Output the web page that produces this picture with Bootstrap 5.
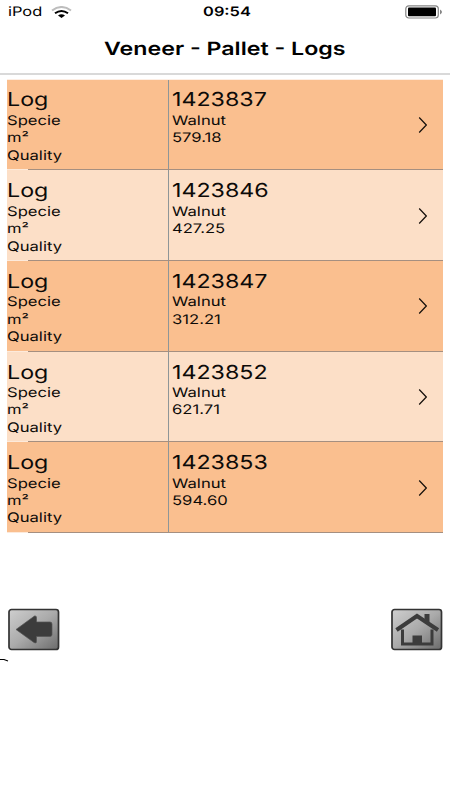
<!DOCTYPE html>
<html lang="en">
<head>
<meta charset="utf-8">
<meta name="viewport" content="width=device-width, initial-scale=1">
<title>Veneer - Pallet - Logs</title>
<link href="https://cdn.jsdelivr.net/npm/bootstrap@5.3.0/dist/css/bootstrap.min.css" rel="stylesheet">
<style>
body{font-family:Inter,"Liberation Sans",sans-serif;color:#000;background:#fff;height:800px;overflow:hidden;text-rendering:geometricPrecision}
.wide{display:inline-block;transform:scaleX(1.26);transform-origin:0 50%;white-space:nowrap}
.mid{transform-origin:50% 50%}
.status{height:24px;font-size:13px;line-height:24px;padding:0 7px 0 8px}
.status>*{flex:1 1 0}
.clock{font-weight:600;padding-left:2px}
.title-bar{height:51px;border-bottom:2px solid #d9d9d9;font-size:18.4px;line-height:20px;padding-top:15px;font-weight:600}
.logs{margin:4px 7px 0;padding-top:1px;background:linear-gradient(#fdeee4 1px,transparent 1px)}
.log-row{height:90.650px;background:#fcdfc7;position:relative;color:#0c0a08;font-size:13.2px;line-height:17.4px}
.log-row:nth-child(odd){background:#fabf8f}
.log-row:first-child{height:90.300px}
.log-row::after{content:"";position:absolute;left:21px;right:0;bottom:0;height:1px;background:#a58f80}
.log-row::before{content:"";position:absolute;left:0;width:21px;bottom:0;height:1px;background:#fdeadb}
.keys{width:161.500px;border-right:1px solid #8e9698;padding:8px 0 0 0}
.vals{padding:8px 0 0 3px}
.log-row:first-child>div{padding-top:7.400px}
.big{font-size:19.2px;line-height:24px;height:25.400px}
.big .wide{transform:scaleX(1.21)}
.tools{margin:75.300px 7px 0 7px}
</style>
<script src="https://cdn.jsdelivr.net/npm/bootstrap@5.3.0/dist/js/bootstrap.bundle.min.js"></script>
</head>
<body>
<header>
<div class="status d-flex align-items-center">
<div class="d-flex align-items-center"><span class="wide" style="width:43px">iPod</span>
<svg width="21" height="13" viewBox="0 0 21 13" fill="none"><path d="M1 4.500Q10.500-2.500 20 4.500" stroke="#bdbdbd" stroke-width="2"/><path d="M4 7.300Q10.500 2.500 17 7.300" stroke="#000" stroke-width="2"/><path d="M7 9.500Q10.500 7 14 9.500L10.500 12Z" fill="#000"/></svg></div>
<div class="clock text-center"><span class="wide mid">09:54</span></div>
<div class="text-end lh-1"><svg width="38" height="14" viewBox="0 0 38 14"><rect x=".8" y=".8" width="32.500" height="12.200" rx="3" fill="#fff" stroke="#858585" stroke-width="1.200"/><rect x="3" y="2.500" width="28" height="8.800" rx="1" fill="#000"/><path d="M35 4.500Q39 7 35 9.500Z" fill="#858585"/></svg></div>
</div>
<h1 class="title-bar text-center m-0"><span class="wide mid">Veneer - Pallet - Logs</span></h1>
</header>
<main>
<div class="logs" id="logs"></div>
<div class="tools d-flex justify-content-between">
<svg width="53" height="44" viewBox="0 0 53 44"><defs><linearGradient id="g" x1="0" y1="0" x2="1" y2="1"><stop stop-color="#cfcfcf"/><stop offset=".5" stop-color="#aaa"/><stop offset="1" stop-color="#6b6b6b"/></linearGradient></defs><rect x="2" y="1.500" width="49.500" height="40" rx="2.500" fill="url(#g)" stroke="#333" stroke-width="1.700"/><path d="M9 21.500L27.500 8Q29.500 7.500 29.500 9.500V14H43Q45 14 45 16V26.500Q45 28.500 43 28.500H29.500V33.500Q29.500 36 27 34.500Z" fill="#3c3c3c" stroke="#555" stroke-width=".7"/></svg>
<svg width="53" height="44" viewBox="0 0 53 44"><rect x="2" y="1.500" width="49.500" height="40" rx="2.500" fill="url(#g)" stroke="#333" stroke-width="1.700"/><path d="M12.500 21.500V36H42V21.500" fill="none" stroke="#3c3c3c" stroke-width="3"/><path d="M34.500 6H39.500V15L34.500 11Z" fill="#3c3c3c"/><path d="M6.500 22L27 8L48 22" fill="none" stroke="#3c3c3c" stroke-width="4"/><path d="M22.500 27.500H32V36.500H22.500Z" fill="#3c3c3c"/></svg>
</div>
<svg class="d-block" width="10" height="10" viewBox="0 0 10 10" fill="none" stroke="#000" stroke-width="1.200"><path d="M0 7.500H4L8 9"/></svg>
</main>
<script>
const logs=[["1423837","579.18"],["1423846","427.25"],["1423847","312.21"],["1423852","621.71"],["1423853","594.60"]];
document.getElementById("logs").innerHTML=logs.map(([id,area])=>`
<div class="log-row d-flex">
<div class="keys"><div class="big"><span class="wide">Log</span></div><div><span class="wide">Specie</span></div><div><span class="wide">m²</span></div><div><span class="wide">Quality</span></div></div>
<div class="vals flex-grow-1"><div class="big"><span class="wide">${id}</span></div><div><span class="wide">Walnut</span></div><div><span class="wide">${area}</span></div></div>
<svg class="align-self-center me-3" width="9" height="18" viewBox="0 0 9 18" fill="none" stroke="#17110c" stroke-width="1.200"><path d="M1.200 1.500L8.300 9L1.200 16.500"/></svg>
</div>`).join("");
</script>
</body>
</html>
